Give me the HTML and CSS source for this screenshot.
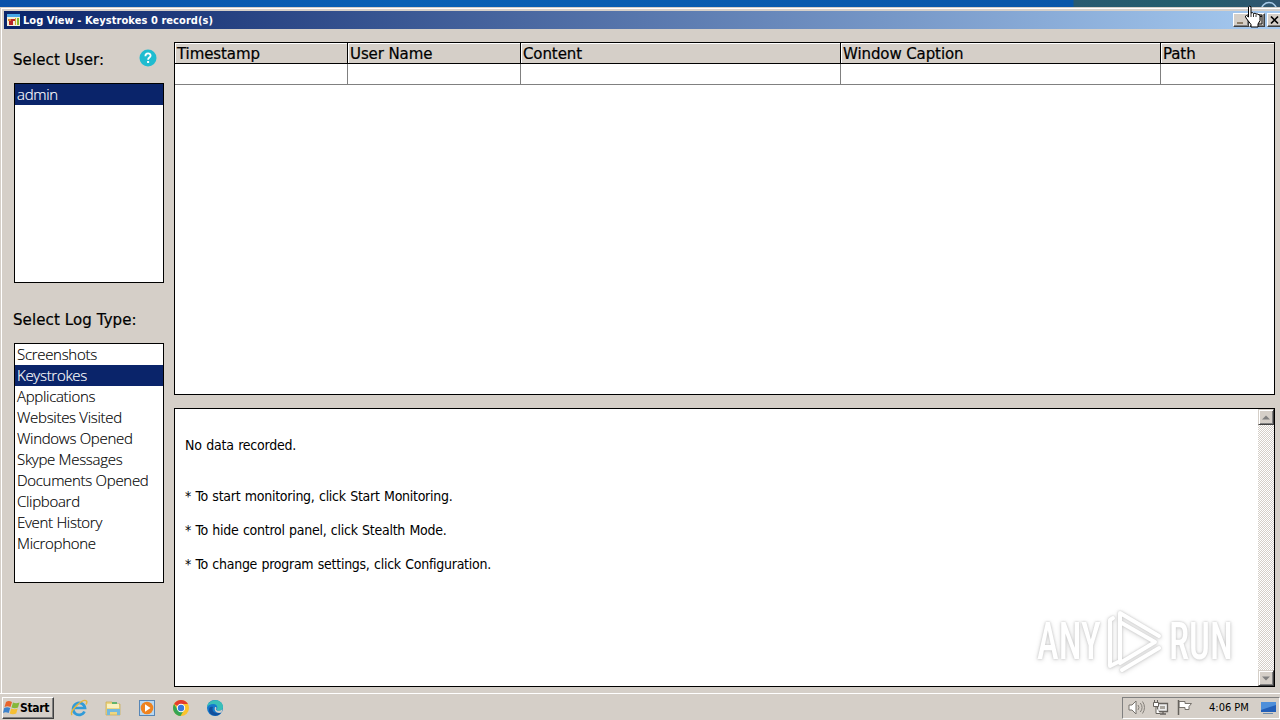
FILE: index.html
```html
<!DOCTYPE html>
<html lang="en">
<head>
    <meta charset="UTF-8">
    <meta name="viewport" content="width=device-width, initial-scale=1.0">
    <title>Log View</title>
    <link rel="stylesheet" href="styles.css">
</head>
<body>
    <div class="desktop">
        <svg class="desktop-ring" width="18" height="7" viewBox="0 0 18 7">
            <circle cx="9" cy="10" r="7.5" fill="none" stroke="#a9cbe8" stroke-width="1.6"/>
        </svg>
    </div>

    <div class="window">
        <div class="title-bar">
            <svg class="title-icon" width="13" height="12" viewBox="0 0 13 12">
                <rect width="13" height="12" fill="#f4f1d8"/>
                <rect width="13" height="3" fill="#48a8e8"/>
                <path d="M1 5h4v2H1z" fill="#e0852c"/>
                <path d="M2 7h2v4H2zM4 5h4v2H6v4H4z" fill="#b8252a"/>
                <path d="M8 4h1v7H8z" fill="#d9a62b"/>
                <path d="M10 4h2v7h-2z" fill="#8cbb2b"/>
            </svg>
            <span class="title-text">Log View - Keystrokes 0 record(s)</span>
            <div class="title-buttons">
                <button class="win-btn"><svg width="14" height="12"><path d="M3 8h6v2H3z" fill="#8c7d68"/></svg></button>
                <button class="win-btn"><svg width="14" height="12"><path d="M3 1h9v9H3zM3 2.5h9" fill="none" stroke="#111"/></svg></button>
                <button class="win-btn win-close"><svg width="14" height="12"><path d="M3 2.5l7 7M10 2.5l-7 7" stroke="#000" stroke-width="1.7"/></svg></button>
            </div>
        </div>

        <div class="content">
            <div class="sidebar">
                <div class="label-row">
                    <span class="label label-user">Select User:</span>
                    <svg class="help-icon" width="18" height="18" viewBox="0 0 18 18">
                        <circle cx="9" cy="9" r="8.5" fill="#20bcd0"/>
                        <path d="M6.4 7.2c0-3.8 5.4-3.6 5.2-.4-.1 1.8-2.5 1.8-2.5 3.9" fill="none" stroke="#fff" stroke-width="1.8"/>
                        <rect x="8.1" y="12" width="2" height="2" fill="#fff"/>
                    </svg>
                </div>
                <ul class="list user-list">
                    <li class="selected">admin</li>
                </ul>
                <div class="label-row type-row"><span class="label label-type">Select Log Type:</span></div>
                <ul class="list type-list">
                    <li>Screenshots</li>
                    <li class="selected">Keystrokes</li>
                    <li>Applications</li>
                    <li>Websites Visited</li>
                    <li>Windows Opened</li>
                    <li>Skype Messages</li>
                    <li>Documents Opened</li>
                    <li>Clipboard</li>
                    <li>Event History</li>
                    <li>Microphone</li>
                </ul>
            </div>

            <div class="main">
                <div class="log-table">
                    <div class="row head">
                        <div>Timestamp</div><div>User Name</div><div>Content</div><div>Window Caption</div><div>Path</div>
                    </div>
                    <div class="row">
                        <div></div><div></div><div></div><div></div><div></div>
                    </div>
                </div>

                <div class="message">
                    <div class="message-text">
                        <p class="first">No data recorded.</p>
                        <p class="tip">* To start monitoring, click Start Monitoring.</p>
                        <p class="tip">* To hide control panel, click Stealth Mode.</p>
                        <p class="tip">* To change program settings, click Configuration.</p>
                    </div>
                    <div class="scrollbar">
                        <div class="scroll-btn"><svg width="8" height="5"><path d="M0 4.5h8L4 .5z" fill="#808080"/></svg></div>
                        <div class="scroll-btn"><svg width="8" height="5"><path d="M0 .5h8L4 4.5z" fill="#808080"/></svg></div>
                    </div>
                    <div class="watermark">
                        <span class="wm-text wm-any">ANY</span>
                        <svg class="wm-logo" width="60" height="68" viewBox="0 0 60 68">
                            <g fill="none" stroke="#fff" stroke-width="4" stroke-linejoin="round" stroke-linecap="round">
                                <path d="M8 11l-3 2v46l8-4"/>
                                <path d="M15 53V6l39 23"/>
                                <path d="M15 15l35 20-35 21z"/>
                                <path d="M17 63l37-22"/>
                            </g>
                        </svg>
                        <span class="wm-text wm-run">RUN</span>
                    </div>
                </div>
            </div>
        </div>
    </div>

    <div class="taskbar">
        <button class="start">
            <svg width="17" height="16" viewBox="0 0 17 16">
                <path d="M3 2c2-1.500 4-1 6 0L7.500 7C5.500 6 3.500 6 1.500 7z" fill="#e8642c"/>
                <path d="M10 2.500c2 1 4 1 6.500 0L15 7.500c-2 1-4.500 1-6.500 0z" fill="#85b83c"/>
                <path d="M1.200 8c2-1 4-1 6 0L5.700 13c-2-1-4-1-5.700 0z" fill="#3c82cc"/>
                <path d="M8.200 8.500c2 1 4.500 1 6.500 0l-1.500 5c-2 1-4.500 1-6.500 0z" fill="#f5bf34"/>
            </svg>
            <span>Start</span>
        </button>
        <div class="quick-launch">
            <svg width="18" height="18" viewBox="0 0 18 18">
                <path d="M14.500 12.500A6 6 0 1 1 15 9H4" fill="none" stroke="#319bd8" stroke-width="2.700"/>
                <path d="M2 16C-1 12 13-1 16.500 2c1 1 0 2.500-.5 3.500" fill="none" stroke="#e5b63c" stroke-width="1.400"/>
            </svg>
            <svg width="18" height="18" viewBox="0 0 18 18">
                <path d="M2 3h6l1 2h7v11H2z" fill="#edd681" stroke="#c9aa4e" stroke-width=".7"/>
                <path d="M3 5h12v4H3z" fill="#f9f1bf"/>
                <path d="M8 3h5v2H8z" fill="#61b36c"/>
                <path d="M3 10h13v6h-3v-3H6v3H3z" fill="#73b9dd"/>
            </svg>
            <svg width="18" height="18" viewBox="0 0 18 18">
                <rect x="1.500" y="1.500" width="15" height="15" fill="#b8d8f2" stroke="#5786b6"/>
                <circle cx="9" cy="9" r="6.300" fill="#ef831f"/>
                <path d="M7 5.300v7.400L12.500 9z" fill="#fff"/>
            </svg>
            <svg width="18" height="18" viewBox="0 0 18 18">
                <circle cx="9" cy="9" r="8" fill="#fbc32d"/>
                <path d="M9 9L2.100 5A8 8 0 0 1 15.900 5H9z" fill="#e33b2e"/>
                <path d="M2.100 5A8 8 0 0 0 8.500 17l3.500-6-5.500 1z" fill="#36a554"/>
                <circle cx="9" cy="9" r="4.200" fill="#fff"/>
                <circle cx="9" cy="9" r="3.200" fill="#3979dc"/>
            </svg>
            <svg width="18" height="18" viewBox="0 0 18 18">
                <circle cx="9" cy="9" r="8" fill="#1579cc"/>
                <path d="M1 8C2-1 17-1 17 8c0 4-4 4.500-6.500 3 2-3 0-6-3-6C4 5 2 6.500 1 8z" fill="#39bfb8"/>
                <path d="M7 8c-2 4 2 8 8 5.500C12 19 3 17 3 11c0-3 2-4 4-3z" fill="#124f9c"/>
                <path d="M9 8c2 0 1.500 1.500 1 2.500 1 2 4 1.500 6.500 0l-1 3c-4 1.500-8-1-6.500-5.500z" fill="#d5cfc8"/>
            </svg>
        </div>
        <div class="tray">
            <svg class="tray-icon" width="18" height="17" viewBox="0 0 18 17">
                <path d="M1 6h3l4-4v13l-4-4H1z" fill="#fff" stroke="#77736d"/>
                <path d="M10 6q2 2.500 0 5M12.300 4q3.500 4.500 0 9M14.500 2.500q4 6 0 12" fill="none" stroke="#85817b"/>
            </svg>
            <svg class="tray-icon" width="18" height="17" viewBox="0 0 18 17">
                <path d="M5.500 4.500h10v8h-10zM8 15h6M11 13v2" fill="#eee" stroke="#66625d" stroke-width="1.300"/>
                <path d="M8 7h5v3H8z" fill="#aaa69f"/>
                <path d="M1.500 3.500h5v4h-5zM2.500 1v2M5.500 1v2M4 8v6.500h4" fill="#fff" stroke="#66625d"/>
            </svg>
            <svg class="tray-icon" width="18" height="17" viewBox="0 0 18 17">
                <path d="M3 2.500h6v2h6.500l-2.500 3 0 3H9v-2H3z" fill="#fff" stroke="#77736d"/>
                <path d="M2.500 1v15" stroke="#66625d" stroke-width="1.500"/>
            </svg>
            <span class="clock">4:06 PM</span>
            <svg class="show-desktop" width="16" height="14" viewBox="0 0 16 14">
                <path d="M1 1h15v10H1z" fill="#235fb8"/>
                <path d="M1 1h15v3L1 9z" fill="#4e8fda"/>
                <path d="M3 12h10v1H3z" fill="#6c8bac"/>
            </svg>
        </div>
    </div>

    <svg class="cursor" width="17" height="23" viewBox="0 0 17 23">
        <path d="M4.500 2q1.500-2 2.500 0v6q2-1 2.500.5 2-.8 2.500.5 1.500-.5 2 .5 1.800-.3 2 1.500v4.500l-2 3.500v3H7v-2.500l-5-6.500q-1.500-2.500.5-2.500l2 1.500z" fill="#fff" stroke="#000"/>
        <path d="M7 8v4M9.500 9v3M12 9.500V12" stroke="#000" stroke-width=".8"/>
    </svg>
</body>
</html>
```
FILE: styles.css
```css
* {
    box-sizing: border-box;
}
body {
    margin: 0;
    width: 1280px;
    height: 720px;
    overflow: hidden;
    display: flex;
    flex-direction: column;
    background: #d5cfc8;
    color: #000;
    font-family: "DejaVu Sans Condensed", "DejaVu Sans", sans-serif;
    font-stretch: condensed;
}
button {
    padding: 0;
    font-family: inherit;
    color: inherit;
}
ul, p {
    margin: 0;
    padding: 0;
    list-style: none;
}
.desktop {
    height: 7px;
    flex: none;
    background: linear-gradient(90deg, #0751a9 0, #0760b5 400px, #0756a9 1073px, #285a70 1074px, #235e6d 1200px, #31556f 1280px);
    display: flex;
    justify-content: flex-end;
}
.desktop-ring {
    margin-right: 2px;
}

/* window */
.window {
    height: 686px;
    flex: none;
    border-top: 1px solid #d5cfc8;
    border-left: 1px solid #d5cfc8;
    box-shadow: inset 1px 1px #fff;
    padding: 3px 0 0 3px;
}
.title-bar {
    height: 18px;
    padding-left: 3px;
    display: flex;
    align-items: center;
    background: linear-gradient(90deg, #0a246a, #a6caf0);
    color: #fff;
    overflow: hidden;
}
.title-text {
    margin-left: 3px;
    font-size: 11px;
    font-weight: bold;
    letter-spacing: 0.06px;
    white-space: nowrap;
}
.title-buttons {
    margin-left: auto;
    margin-right: -3px;
    display: flex;
}
.win-btn {
    width: 16px;
    height: 14px;
    border: 1px solid;
    border-color: #fff #404040 #404040 #fff;
    background: #d5cfc8;
    box-shadow: inset -1px -1px #808080;
    display: flex;
}
.win-close {
    margin-left: 2px;
}
.content {
    display: flex;
    padding: 13px 5px 0 10px;
}
.sidebar {
    width: 150px;
    margin-right: 10px;
}
.label-row {
    height: 41px;
    padding-top: 7px;
    display: flex;
    justify-content: space-between;
}
.type-row {
    height: 60px;
    padding-top: 26px;
}
.label {
    margin-left: -1px;
    font-family: "DejaVu Sans", sans-serif;
    font-stretch: normal;
    font-size: 15px;
    line-height: 23px;
    -webkit-text-stroke: 0.2px #000;
    white-space: nowrap;
}
.label-user {
    letter-spacing: 0.1px;
}
.label-type {
    letter-spacing: 0.1px;
}
.help-icon {
    margin: 0 7px 0 0;
}
.list {
    border: 1px solid #000;
    background: #fff;
    font-family: "Open Sans", sans-serif;
    font-stretch: normal;
    font-weight: 300;
    font-size: 15px;
    letter-spacing: -0.3px;
    line-height: 21px;
    -webkit-text-stroke: 0.15px;
}
.list li {
    height: 21px;
    padding-left: 2px;
    white-space: nowrap;
}
.list .selected {
    background: #0a246a;
    color: #fff;
}
.user-list {
    height: 200px;
}
.type-list {
    height: 240px;
}
.main {
    flex: 1;
}
.log-table {
    height: 353px;
    border: 1px solid #000;
    background: #fff;
}
.row {
    display: grid;
    grid-template-columns: 173px 173px 320px 320px 1fr;
    height: 21px;
    border-bottom: 1px solid #808080;
}
.row div {
    border-right: 1px solid #808080;
}
.row div:last-child {
    border-right: none;
}
.head {
    background: #d5cfc8;
    border-bottom-color: #000;
    font-family: "DejaVu Sans", sans-serif;
    font-stretch: normal;
    font-size: 15px;
    line-height: 22px;
    letter-spacing: -0.1px;
    -webkit-text-stroke: 0.2px #000;
}
.head div {
    height: 20px;
    padding-left: 2px;
    border-right-color: #000;
    box-shadow: inset 1px 1px #fff;
    white-space: nowrap;
}

/* message pane */
.message {
    position: relative;
    height: 279px;
    margin-top: 13px;
    border: 1px solid #000;
    background: #fff;
    display: flex;
    justify-content: space-between;
}
.message-text {
    padding: 28px 0 0 10px;
    font-size: 14px;
    line-height: 17px;
    letter-spacing: -0.22px;
    word-spacing: 0.7px;
}
.message-text p {
    margin-bottom: 17px;
    white-space: nowrap;
}
.message-text .first {
    margin-bottom: 34px;
}
.tip {
    letter-spacing: -0.27px;
}
.tip::first-letter {
    margin-right: 2px;
}
.scrollbar {
    width: 16px;
    display: flex;
    flex-direction: column;
    justify-content: space-between;
    background: repeating-conic-gradient(#fff 0 25%, #d5cfc8 0 50%) 0 0 / 2px 2px;
}
.scroll-btn {
    height: 16px;
    background: #d5cfc8;
    border: 1px solid;
    border-color: #d5cfc8 #404040 #404040 #d5cfc8;
    box-shadow: inset 1px 1px #fff, inset -1px -1px #808080;
    display: flex;
    align-items: center;
    justify-content: center;
}
.watermark {
    position: absolute;
    right: 41px;
    bottom: 11px;
    height: 68px;
    width: 196px;
    display: flex;
    align-items: center;
    justify-content: space-between;
    color: #fff;
    filter: drop-shadow(0 0 1px #c4c4c4) drop-shadow(0 1px 2px #ddd);
}
.wm-text {
    width: 64px;
    font-family: Roboto, sans-serif;
    font-weight: 500;
    font-size: 52px;
    line-height: 60px;
    transform: translateY(1px) scaleX(0.71);
    transform-origin: left;
}
.wm-logo {
    flex: none;
}

/* taskbar */
.taskbar {
    height: 27px;
    flex: none;
    display: flex;
    align-items: center;
    border-top: 1px solid #fff;
    padding: 2px 0 1px 2px;
}
.start {
    width: 52px;
    height: 22px;
    border: 1px solid;
    border-color: #fff #404040 #404040 #fff;
    box-shadow: inset -1px -1px #808080;
    background: #d5cfc8;
    display: flex;
    align-items: center;
    font-size: 12px;
    font-weight: bold;
    letter-spacing: -0.3px;
}
.start svg {
    flex: none;
}
.quick-launch {
    margin-left: 16px;
    display: flex;
    gap: 16px;
}
.tray {
    margin-left: auto;
    width: 158px;
    height: 22px;
    padding-left: 5px;
    border: 1px solid;
    border-color: #808080 #fff #fff #808080;
    display: flex;
    align-items: center;
}
.tray-icon {
    flex: none;
    margin-right: 6px;
}
.clock {
    margin-left: 9px;
    font-size: 11px;
    white-space: nowrap;
}
.show-desktop {
    margin-left: auto;
    margin-right: 3px;
}
.cursor {
    position: absolute;
    left: 1244px;
    top: 5px;
}
```
